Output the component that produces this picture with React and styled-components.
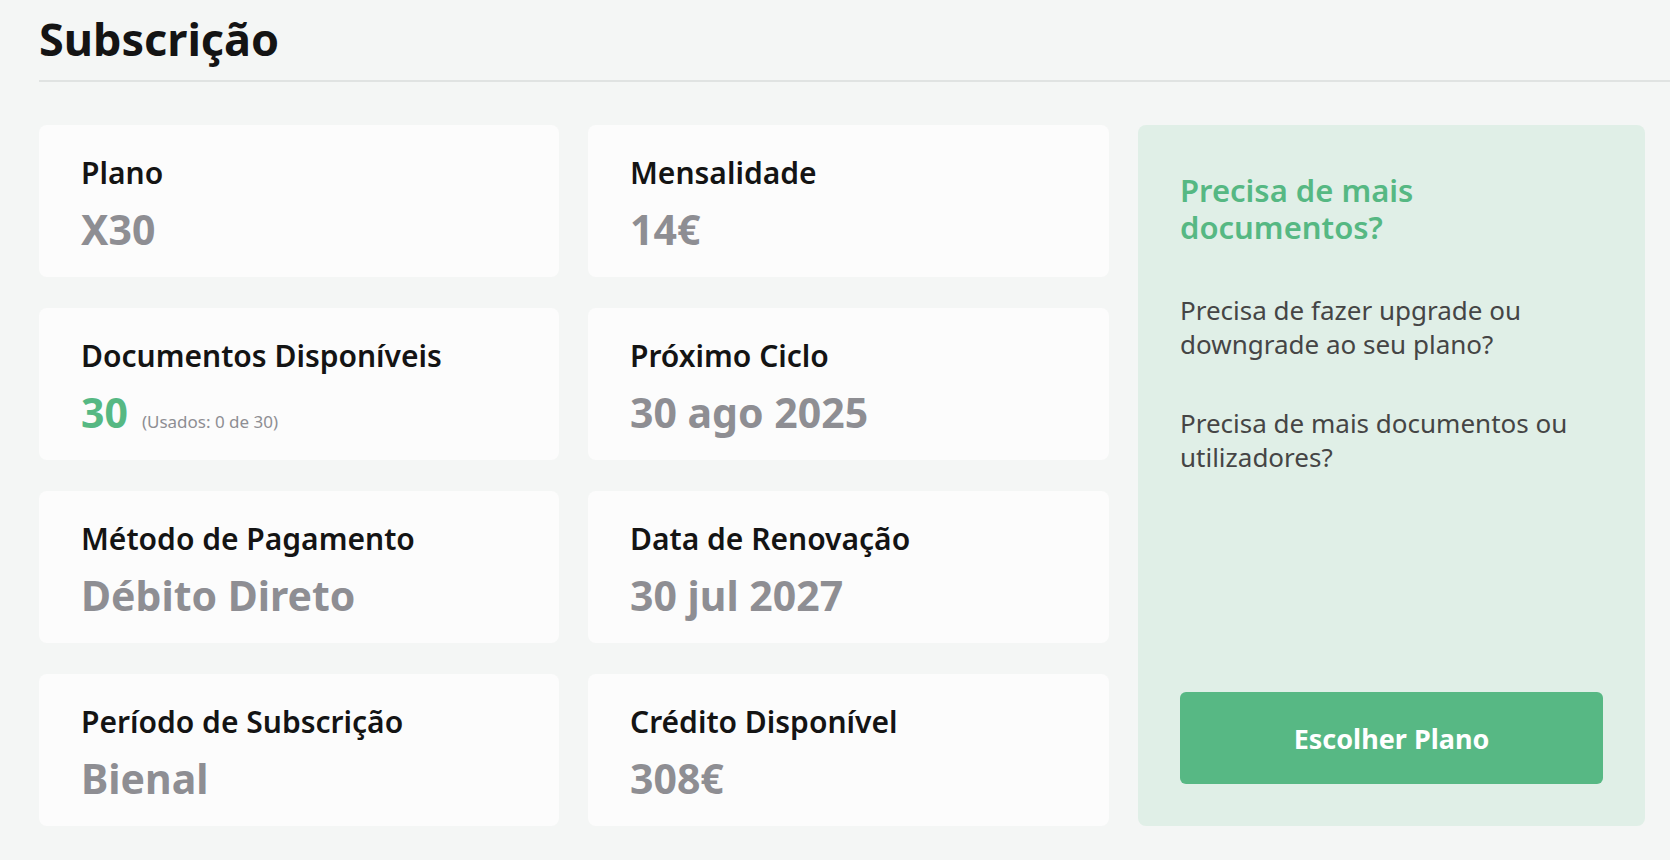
import React from "react";
import styled, { createGlobalStyle } from "styled-components";

const GlobalStyle = createGlobalStyle`
  body {
    margin: 0;
    background: #f4f6f5;
    font-family: "Noto Sans", "Open Sans", sans-serif;
  }
`;

const Page = styled.div`
  padding-left: 39px;
  padding-bottom: 32px;
`;

const Header = styled.h1`
  margin: 0;
  padding: 12px 0 15px;
  font-size: 45px;
  line-height: 53px;
  font-weight: 700;
  color: #141414;
  border-bottom: 2px solid #e0e3e2;
`;

const Grid = styled.div`
  margin-top: 43px;
  display: grid;
  grid-template-columns: 520px 521px 507px;
  grid-auto-rows: 152px;
  column-gap: 29px;
  row-gap: 31px;
`;

const Card = styled.div`
  background: #fcfcfc;
  border-radius: 8px;
  padding: 31px 42px 0;
  box-sizing: border-box;
`;

const Label = styled.div`
  font-size: 30px;
  line-height: 34px;
  font-weight: 600;
  color: #141414;
`;

const Value = styled.div`
  margin-top: 14px;
  display: flex;
  align-items: baseline;
  gap: 14px;
  font-size: 41px;
  line-height: 50px;
  font-weight: 700;
  color: ${(p) => (p.$accent ? "#56b883" : "#8e8e93")};
`;

const Note = styled.span`
  font-size: 17px;
  font-weight: 400;
  color: #8e8e93;
`;

const Panel = styled.aside`
  grid-column: 3;
  grid-row: 1 / span 4;
  background: #e0efe7;
  border-radius: 8px;
  padding: 47px 42px 42px;
  display: flex;
  flex-direction: column;
`;

const PanelTitle = styled.h2`
  margin: 0 0 47px;
  max-width: 320px;
  font-size: 31px;
  line-height: 37px;
  font-weight: 600;
  color: #56b883;
`;

const PanelText = styled.p`
  margin: 0 0 45px;
  font-size: 26px;
  line-height: 34px;
  color: #454545;
`;

const ChooseButton = styled.button`
  margin-top: auto;
  height: 92px;
  border: none;
  border-radius: 6px;
  background: #57b884;
  color: #fff;
  font-family: inherit;
  font-size: 27px;
  font-weight: 700;
  cursor: pointer;
`;

const details = [
  { label: "Plano", value: "X30" },
  { label: "Mensalidade", value: "14€" },
  { label: "Documentos Disponíveis", value: "30", accent: true, note: "(Usados: 0 de 30)" },
  { label: "Próximo Ciclo", value: "30 ago 2025" },
  { label: "Método de Pagamento", value: "Débito Direto" },
  { label: "Data de Renovação", value: "30 jul 2027" },
  { label: "Período de Subscrição", value: "Bienal" },
  { label: "Crédito Disponível", value: "308€" },
];

const App = () => {
  return (
    <Page>
      <GlobalStyle />
      <Header>Subscrição</Header>
      <Grid>
        {details.map((d) => (
          <Card key={d.label}>
            <Label>{d.label}</Label>
            <Value $accent={d.accent}>
              {d.value}
              {d.note && <Note>{d.note}</Note>}
            </Value>
          </Card>
        ))}
        <Panel>
          <PanelTitle>Precisa de mais documentos?</PanelTitle>
          <PanelText>Precisa de fazer upgrade ou downgrade ao seu plano?</PanelText>
          <PanelText>Precisa de mais documentos ou utilizadores?</PanelText>
          <ChooseButton>Escolher Plano</ChooseButton>
        </Panel>
      </Grid>
    </Page>
  );
};

export default App;
